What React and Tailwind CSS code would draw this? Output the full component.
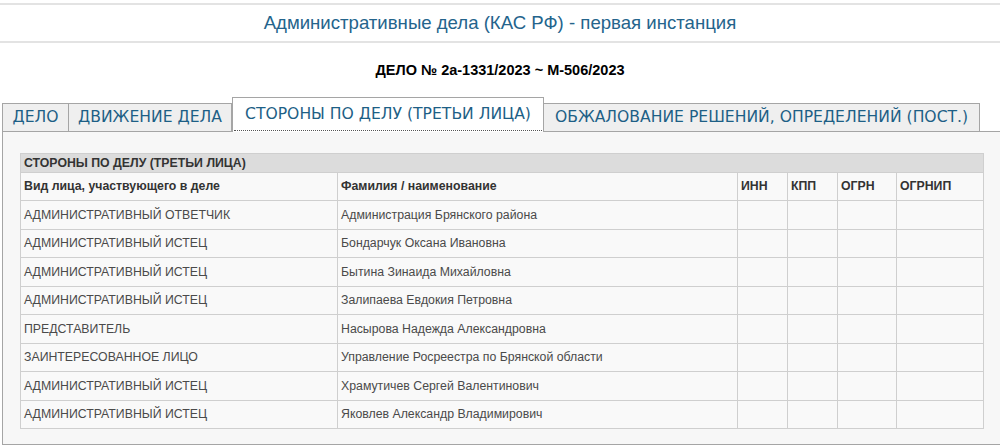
import React from "react";

const rows = [
  ["АДМИНИСТРАТИВНЫЙ ОТВЕТЧИК", "Администрация Брянского района"],
  ["АДМИНИСТРАТИВНЫЙ ИСТЕЦ", "Бондарчук Оксана Ивановна"],
  ["АДМИНИСТРАТИВНЫЙ ИСТЕЦ", "Бытина Зинаида Михайловна"],
  ["АДМИНИСТРАТИВНЫЙ ИСТЕЦ", "Залипаева Евдокия Петровна"],
  ["ПРЕДСТАВИТЕЛЬ", "Насырова Надежда Александровна"],
  ["ЗАИНТЕРЕСОВАННОЕ ЛИЦО", "Управление Росреестра по Брянской области"],
  ["АДМИНИСТРАТИВНЫЙ ИСТЕЦ", "Храмутичев Сергей Валентинович"],
  ["АДМИНИСТРАТИВНЫЙ ИСТЕЦ", "Яковлев Александр Владимирович"],
];

const cell = "border border-[#cfcfcf] px-[3px] text-left align-middle";

export default function App() {
  return (
    <div className="w-[1000px] h-[446px] bg-white overflow-hidden font-['Liberation_Sans',Arial,sans-serif]">
      {/* title */}
      <div className="mt-[3px] border-t-2 border-b-2 border-[#e3e3e3] h-[40px] flex items-center justify-center">
        <h1 className="text-[18.6px] text-[#24648c] font-normal">
          Административные дела (КАС РФ) - первая инстанция
        </h1>
      </div>

      <div className="mt-[17px] text-center text-[14.5px] font-bold text-black">
        ДЕЛО № 2а-1331/2023 ~ М-506/2023
      </div>

      {/* tabs */}
      <div className="mt-[15px] pl-[2px] flex items-end font-['DejaVu_Sans',Verdana,sans-serif] text-[15.6px] text-[#1d5f86] relative z-10">
        <div className="h-[28px] w-[67px] flex items-center justify-center bg-[#efefef] border border-b-0 border-[#a5a5a5]">
          ДЕЛО
        </div>
        <div className="h-[28px] w-[163px] flex items-center justify-center bg-[#efefef] border border-l-0 border-b-0 border-[#a5a5a5]">
          ДВИЖЕНИЕ ДЕЛА
        </div>
        <div className="h-[35px] w-[312px] flex items-center justify-center bg-white border border-b-0 border-[#a5a5a5] -mb-px">
          <span className="h-[32px] w-[308px] flex items-center justify-center border-b border-dotted border-[#555]">
            СТОРОНЫ ПО ДЕЛУ (ТРЕТЬИ ЛИЦА)
          </span>
        </div>
        <div className="h-[28px] w-[436px] flex items-center justify-center bg-[#efefef] border border-l-0 border-b-0 border-[#a5a5a5]">
          ОБЖАЛОВАНИЕ РЕШЕНИЙ, ОПРЕДЕЛЕНИЙ (ПОСТ.)
        </div>
      </div>

      {/* panel */}
      <div className="ml-[2px] h-[314px] border border-r-0 border-[#a5a5a5] bg-[#f7f7f7] pt-[21px] pl-[17px]">
        <table className="w-[964px] border-collapse text-[12.3px] text-[#4a4a4a]">
          <thead>
            <tr className="h-[19px] bg-[#dcdcdc]">
              <th colSpan={6} className={cell + " font-bold text-[#333]"}>
                СТОРОНЫ ПО ДЕЛУ (ТРЕТЬИ ЛИЦА)
              </th>
            </tr>
            <tr className="h-[28px] bg-[#f9f9f9]">
              <th className={cell + " w-[317px] font-bold text-[#333]"}>Вид лица, участвующего в деле</th>
              <th className={cell + " w-[400px] font-bold text-[#333]"}>Фамилия / наименование</th>
              <th className={cell + " w-[50px] font-bold text-[#333]"}>ИНН</th>
              <th className={cell + " w-[50px] font-bold text-[#333]"}>КПП</th>
              <th className={cell + " w-[59px] font-bold text-[#333]"}>ОГРН</th>
              <th className={cell + " font-bold text-[#333]"}>ОГРНИП</th>
            </tr>
          </thead>
          <tbody>
            {rows.map((r, i) => (
              <tr key={i} className="h-[28.5px] bg-[#f9f9f9]">
                <td className={cell}>{r[0]}</td>
                <td className={cell}>{r[1]}</td>
                <td className={cell}></td>
                <td className={cell}></td>
                <td className={cell}></td>
                <td className={cell}></td>
              </tr>
            ))}
          </tbody>
        </table>
      </div>
    </div>
  );
}
